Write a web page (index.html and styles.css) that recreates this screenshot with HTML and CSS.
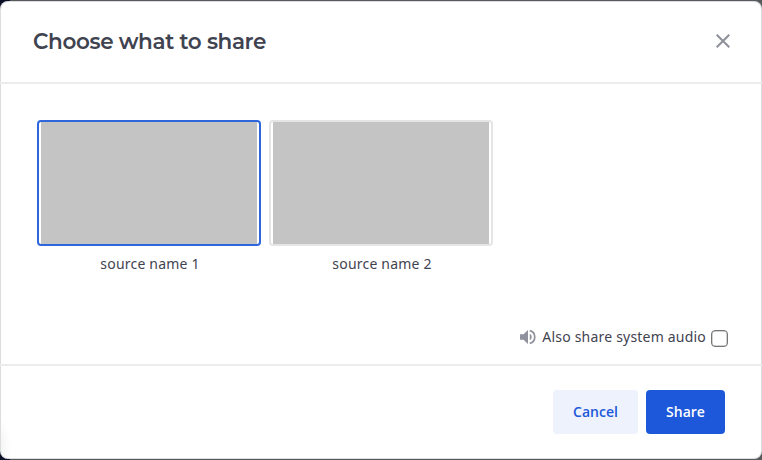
FILE: index.html
```html
<!DOCTYPE html>
<html lang="en">
<head>
<meta charset="utf-8">
<title>Choose what to share</title>
<link rel="stylesheet" href="styles.css">
</head>
<body>
<div class="modal">
  <header class="header">
    <h1 class="title">Choose what to share</h1>
    <button class="close" aria-label="Close">
      <svg width="14" height="14" viewBox="0 0 14 14"><path d="M.7.7l12.6 12.6M13.3.7L.7 13.3" stroke="#8d9099" stroke-width="2" fill="none"/></svg>
    </button>
  </header>
  <main class="body">
    <div class="sources">
      <div class="source selected"><div class="frame"><div class="thumb"></div></div><span class="name">source name 1</span></div>
      <div class="source"><div class="frame"><div class="thumb"></div></div><span class="name">source name 2</span></div>
    </div>
    <label class="audio">
      <svg class="speaker" width="16" height="16" viewBox="0 0 18 18" preserveAspectRatio="none"><path d="M0 6v6h4l5 5V1L4 6z" fill="#8f919d"/><path d="M11 5.4v7.2a4 4 0 0 0 0-7.2z" fill="#8f919d"/><path d="M11 1.9a7.3 7.3 0 0 1 0 14.2" stroke="#8f919d" stroke-width="1.9" fill="none"/></svg>
      <span class="audio-text">Also share system audio</span>
      <input class="check" type="checkbox">
    </label>
  </main>
  <footer class="footer">
    <button class="btn cancel">Cancel</button>
    <button class="btn share">Share</button>
  </footer>
</div>
</body>
</html>
```
FILE: styles.css
```css
* { box-sizing: border-box; }
body { margin: 0; height: 460px; padding: 1px 0; background: linear-gradient(90deg, #0d1128 0 10px, #58595b 10px); overflow: hidden; font-family: "Noto Sans", "Open Sans", sans-serif; color: #3f4350; }
.modal { height: 458px; background: radial-gradient(ellipse 11px 28px at 0 445px, #f3f3f3, #fff) #fff; box-shadow: inset 0 0 0 1px #dcdde0; border-radius: 8px; display: flex; flex-direction: column; overflow: hidden; }
.header { height: 83px; flex: none; border-bottom: 2px solid #ececed; display: flex; align-items: center; justify-content: space-between; padding: 0 32px 2px 33px; }
.title { margin: 0; padding-top: 1px; font: 600 21.5px/28px Metropolis, Montserrat, "Open Sans", sans-serif; letter-spacing: -0.37px; }
.close { border: 0; padding: 0; background: none; width: 14px; height: 14px; display: flex; }
.body { flex: 1; padding: 36px 34px 15px 37px; display: flex; flex-direction: column; justify-content: space-between; }
.sources { display: flex; gap: 8px; }
.source { width: 224px; text-align: center; }
.frame { height: 126px; border: 2px solid #e5e5e6; border-radius: 4px; padding: 0 2px; }
.selected .frame { border-color: #2f66db; }
.thumb { height: 100%; background: #c4c4c4; }
.name { display: block; font-size: 14px; line-height: 20px; margin-top: 8px; padding-left: 2px; letter-spacing: .2px; }
.audio { display: flex; justify-content: flex-end; align-items: center; font-size: 14px; line-height: 24px; letter-spacing: .2px; }
.speaker { margin-right: 6px; }
.check { appearance: none; width: 17px; height: 17px; margin: 2px 0 0 5px; border: 1.5px solid #767676; box-shadow: inset 0 0 0 .5px #a5a5a5; border-radius: 4px; }
.footer { height: 95px; flex: none; border-top: 2px solid #ececed; display: flex; justify-content: flex-end; align-items: center; gap: 8px; padding: 0 37px 2px; }
.btn { height: 44px; border: 0; border-radius: 4px; font: 600 14px/20px "Open Sans", sans-serif; padding: 0; }
.cancel { width: 85px; background: #edf2fd; color: #1c58d9; }
.share { width: 79px; background: #1c58d9; color: #fff; }
```
